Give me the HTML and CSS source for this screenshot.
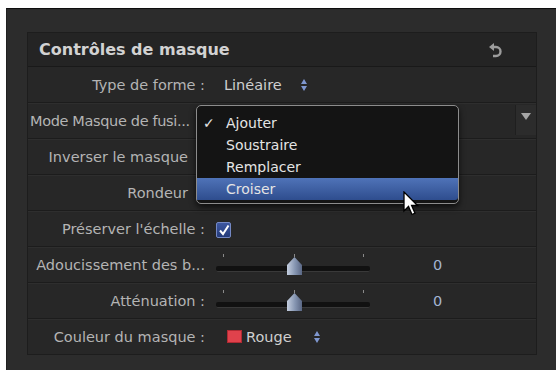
FILE: index.html
```html
<!DOCTYPE html>
<html lang="fr">
<head>
  <meta charset="UTF-8" />
  <title>Contrôles de masque</title>
  <link rel="stylesheet" href="styles.css">
</head>
<body>
  <div class="window">
    <div class="panel">
      <div class="panel-head">
        <span class="title">Contrôles de masque</span>
        <svg class="reset" width="16" height="18" viewBox="0 0 16 18">
          <polygon points="1,5 6,1 6,9" fill="#9c9c9c"/>
          <path d="M5 5 H8 A4.5 4.5 0 0 1 8 14 H5" fill="none" stroke="#9c9c9c" stroke-width="2.4"/>
        </svg>
      </div>

      <div class="row">
        <div class="label">Type de forme :</div>
        <div class="value">
          <span class="popup-text">Linéaire</span>
          <span class="stepper stepper-forme"></span>
        </div>
      </div>

      <div class="row">
        <div class="label label-cut">Mode Masque de fusi...</div>
        <div class="drop-btn"><span class="tri"></span></div>
      </div>

      <div class="row">
        <div class="label label-under">Inverser le masque</div>
      </div>

      <div class="row">
        <div class="label label-under">Rondeur</div>
      </div>

      <div class="row">
        <div class="label">Préserver l'échelle :</div>
        <div class="value">
          <span class="checkbox">
            <svg width="12" height="12" viewBox="0 0 12 12">
              <path d="M2 6.5 L5 10 L10.5 1.5" fill="none" stroke="#fff" stroke-width="2"/>
            </svg>
          </span>
        </div>
      </div>

      <div class="row">
        <div class="label">Adoucissement des b...</div>
        <div class="value">
          <div class="slider">
            <span class="tick t1"></span><span class="tick t2"></span><span class="tick t3"></span>
            <span class="track"></span>
            <span class="thumb"></span>
          </div>
          <span class="num">0</span>
        </div>
      </div>

      <div class="row">
        <div class="label">Atténuation :</div>
        <div class="value">
          <div class="slider">
            <span class="tick t1"></span><span class="tick t2"></span><span class="tick t3"></span>
            <span class="track"></span>
            <span class="thumb"></span>
          </div>
          <span class="num">0</span>
        </div>
      </div>

      <div class="row last">
        <div class="label">Couleur du masque :</div>
        <div class="value">
          <span class="swatch"></span>
          <span class="popup-text">Rouge</span>
          <span class="stepper stepper-rouge"></span>
        </div>
      </div>

      <!-- menu ouvert du mode de fusion -->
      <ul class="menu">
        <li><span class="check">✓</span>Ajouter</li>
        <li>Soustraire</li>
        <li>Remplacer</li>
        <li class="selected">Croiser</li>
      </ul>
    </div>

    <svg class="cursor" width="16" height="26" viewBox="0 0 16 26">
      <path d="M1 1 L1 20 L5.5 15.5 L9 23.5 L12 22.2 L8.6 14.5 L14.5 14.5 Z" fill="#fff" stroke="#000" stroke-width="1.3"/>
    </svg>
  </div>
</body>
</html>
```

FILE: styles.css
```css
body {
  margin: 0;
  background-color: #fff;
  font-family: 'DejaVu Sans', sans-serif;
}

.window {
  position: relative;
  margin: 8px 4px 0 6px;
  height: 338px;
  padding: 23px 19px 0 20px;
  background-color: #2c2c2c;
  border-top: 1px solid #0e0e0e;
  border-left: 1px solid #202020;
  box-shadow: inset -6px 0 0 #2f2f2f;
  overflow: hidden;
}

.panel {
  position: relative;
  background-color: #272727;
  border: 1px solid #1d1d1d;
}

.panel-head {
  display: flex;
  align-items: center;
  justify-content: space-between;
  height: 33px;
  padding: 0 32px 0 11px;
  background-color: #242424;
  border-bottom: 1px solid #191919;
}

.title {
  font-size: 16px;
  font-weight: bold;
  color: #d2d2d2;
}

.reset {
  margin-top: 2px;
}

.row {
  display: flex;
  align-items: center;
  height: 35px;
  border-bottom: 1px solid #1c1c1c;
  box-shadow: 0 1px 0 #2e2e2e;
  font-size: 14.5px;
}

.row.last {
  border-bottom: none;
  box-shadow: none;
}

.label {
  flex: none;
  width: 177px;
  text-align: right;
  white-space: nowrap;
  color: #b4b4b4;
}

/* libellés à moitié sous le menu ouvert */
.label-cut {
  width: 166px;
  margin-right: 11px;
  padding-left: 2px;
  text-align: left;
  letter-spacing: -0.35px;
  box-sizing: border-box;
}

.label-under {
  width: 160px;
  margin-right: 17px;
}

.value {
  display: flex;
  align-items: center;
  margin-left: 11px;
}

.popup-text {
  color: #cfcfcf;
}

.value > .popup-text:first-child {
  margin-left: 8px;
}

.stepper {
  position: relative;
  width: 7px;
  height: 12px;
}

.stepper::before,
.stepper::after {
  content: "";
  position: absolute;
  left: 0;
  border-left: 3.5px solid transparent;
  border-right: 3.5px solid transparent;
}

.stepper::before {
  top: 0;
  border-bottom: 5px solid #7f97cf;
}

.stepper::after {
  bottom: 0;
  border-top: 5px solid #7f97cf;
}

.stepper-forme {
  margin-left: 19px;
}

.stepper-rouge {
  margin-left: 22px;
}

.drop-btn {
  display: flex;
  align-items: center;
  justify-content: center;
  margin-left: auto;
  width: 20px;
  height: 30px;
  margin-top: -2px;
  background-color: #2c2c2c;
  border-left: 1px solid #1f1f1f;
}

.tri {
  border-left: 5px solid transparent;
  border-right: 5px solid transparent;
  border-top: 7px solid #a6a6a6;
  margin-top: -6px;
}

.checkbox {
  display: flex;
  align-items: center;
  justify-content: center;
  width: 13px;
  height: 14px;
  margin-top: 2px;
  background: linear-gradient(#3d57a0, #243b7a);
  border: 1px solid #7488c4;
  border-radius: 2px;
}

.slider {
  position: relative;
  width: 154px;
  height: 35px;
}

.tick {
  position: absolute;
  top: 7px;
  width: 1px;
  height: 3px;
  background-color: #8a8a8a;
}

.t1 { left: 7px; }
.t2 { left: 78px; }
.t3 { left: 147px; }

.track {
  position: absolute;
  left: 0;
  right: 0;
  top: 19px;
  height: 5px;
  background-color: #111;
  border-bottom: 1px solid #393939;
  border-radius: 2px;
}

.thumb {
  position: absolute;
  left: 71px;
  top: 10px;
  width: 15px;
  height: 18px;
  background: linear-gradient(90deg, #c4cedf, #8494b0 55%, #5a6784);
  clip-path: polygon(50% 0, 100% 45%, 100% 100%, 0 100%, 0 45%);
}

.num {
  margin-left: 63px;
  color: #a3b5d2;
}

.swatch {
  width: 15px;
  height: 13px;
  margin: 0 4px 0 11px;
  background-color: #e0424c;
  border: 1px solid #b02a33;
  box-sizing: border-box;
}

.menu {
  position: absolute;
  left: 168px;
  top: 72px;
  width: 261px;
  margin: 0;
  padding: 6px 0 3px;
  list-style: none;
  background-color: #141414;
  border: 1px solid #8c8c8c;
  border-radius: 5px;
  box-shadow: 0 3px 6px rgba(0, 0, 0, 0.7);
  font-size: 14px;
  color: #e4e4e4;
}

.menu li {
  position: relative;
  height: 22px;
  line-height: 22px;
  padding-left: 29px;
}

.check {
  position: absolute;
  left: 6px;
}

.menu .selected {
  background: linear-gradient(#4f73b8, #2e4d8e);
  border-bottom-right-radius: 3px;
}

.cursor {
  position: absolute;
  left: 396px;
  top: 182px;
}
```
